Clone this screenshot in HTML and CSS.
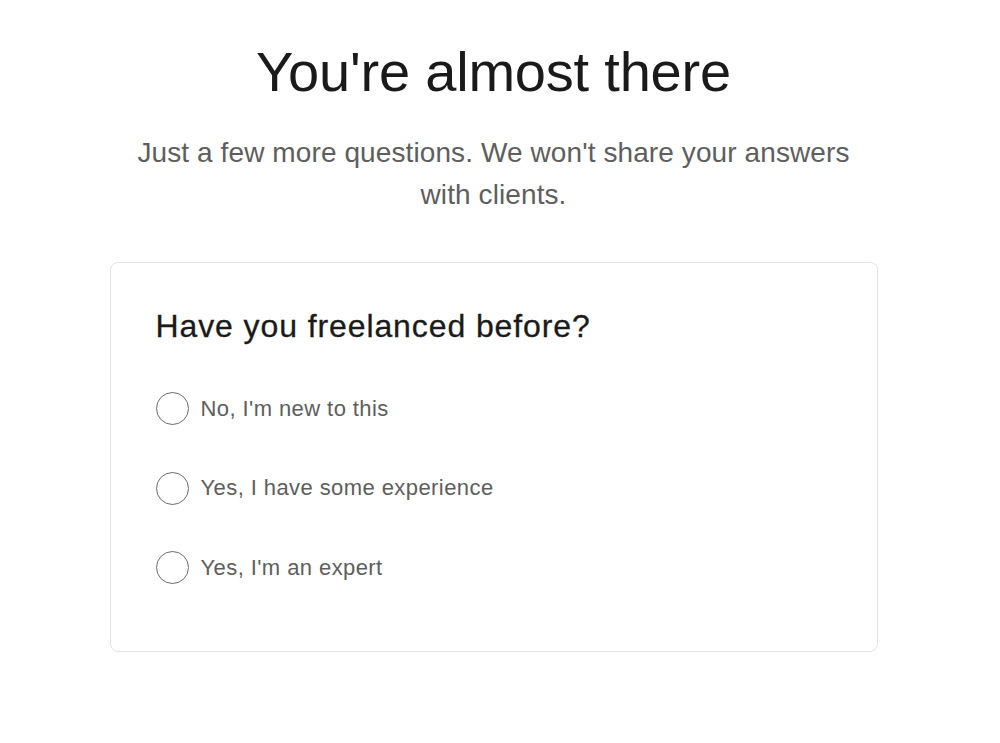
FILE: index.html
```html
<!DOCTYPE html>
<html>
<head>
<meta charset="utf-8">
<link rel="stylesheet" href="styles.css">
</head>
<body>
<main class="page">
  <h1 class="title">You're almost there</h1>
  <p class="subtitle">Just a few more questions. We won't share your answers with clients.</p>
  <section class="card">
    <h2 class="question">Have you freelanced before?</h2>
    <ul class="options">
      <li class="option"><span class="radio"></span><span class="label">No, I'm new to this</span></li>
      <li class="option"><span class="radio"></span><span class="label">Yes, I have some experience</span></li>
      <li class="option"><span class="radio"></span><span class="label">Yes, I'm an expert</span></li>
    </ul>
  </section>
</main>
</body>
</html>
```
FILE: styles.css
```css
html, body {
  margin: 0;
  padding: 0;
  background: #ffffff;
}
body {
  font-family: "Liberation Sans", Arial, sans-serif;
  color: #1a1a1a;
}
.page {
  display: flex;
  flex-direction: column;
  align-items: center;
  padding: 38px 13px 0 0;
}
.title {
  margin: 0;
  font-size: 56px;
  font-weight: 400;
  line-height: 68px;
  color: #1a1a1a;
  letter-spacing: -0.2px;
}
.subtitle {
  margin: 26px 0 0;
  width: 740px;
  text-align: center;
  font-size: 28px;
  line-height: 42px;
  color: #5e5e5e;
  letter-spacing: 0.1px;
}
.card {
  box-sizing: border-box;
  margin-top: 46px;
  width: 768px;
  height: 390px;
  border: 1px solid #e4e4e4;
  border-radius: 8px;
  padding: 43px 45px 0;
}
.question {
  margin: 0;
  font-size: 32px;
  font-weight: 400;
  line-height: 40px;
  color: #1a1a1a;
  letter-spacing: 0.9px;
  -webkit-text-stroke: 0.3px #1a1a1a;
}
.options {
  list-style: none;
  margin: 46px 0 0;
  padding: 0;
  display: flex;
  flex-direction: column;
  gap: 46.5px;
}
.option {
  display: flex;
  align-items: center;
  gap: 12px;
  height: 33px;
}
.radio {
  box-sizing: border-box;
  width: 33px;
  height: 33px;
  border: 1.5px solid #6b6b6b;
  border-radius: 50%;
  flex-shrink: 0;
}
.label {
  font-size: 22px;
  letter-spacing: 0.42px;
  color: #5e5e5e;
}
```
